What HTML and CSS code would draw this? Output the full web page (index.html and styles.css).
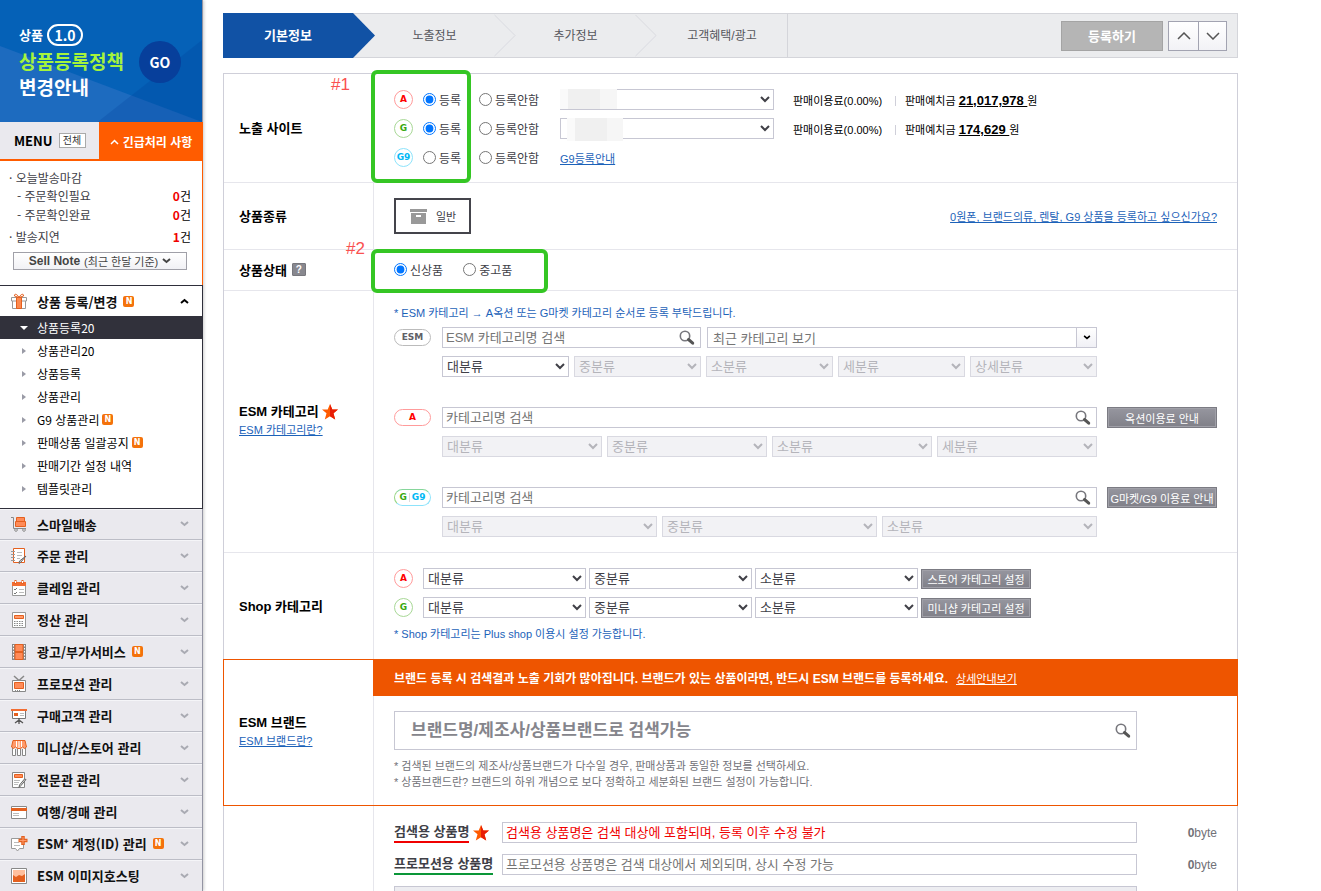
FILE: index.html
```html
<!DOCTYPE html>
<html lang="ko">
<head>
<meta charset="utf-8">
<title>상품등록</title>
<link rel="stylesheet" href="styles.css">
</head>
<body>
<svg class="defs" aria-hidden="true">
  <symbol id="down" viewBox="0 0 9 6"><path d="M1 1l3.500 3L8 1" fill="none" stroke="currentColor" stroke-width="2"/></symbol>
  <symbol id="search" viewBox="0 0 16 16"><circle cx="6" cy="6" r="4.700" fill="none" stroke="#77777d" stroke-width="1.600"/><path d="M9.500 9.500l4.200 3.700" stroke="#555" stroke-width="3" stroke-linecap="round"/></symbol>
  <symbol id="star" viewBox="0 0 16 16"><path d="M8 0l2.300 5.500H16l-4.500 3.800L13.200 15.500 8 12.200l-5.200 3.300 1.700-6.200L0 5.500h5.700z" fill="#ff5a00"/><path d="M8 0l2.300 5.500H16l-4.500 3.800L13.200 15.500 8 12.200z" fill="#e81c05"/></symbol>
</svg>
<div class="page">
  <aside class="side">
    <a class="promo" href="#">
      <svg class="promo-bg" viewBox="0 0 203 122" preserveAspectRatio="none" aria-hidden="true"><path d="M0 46L203 122H0z" fill="#1d6bbf"/><path d="M203 40L98 122h105z" fill="#003d94" fill-opacity=".22"/></svg>
      <span class="promo-text">
        <span class="promo-top">상품 <span class="pill-ver">1.0</span></span>
        <span class="lime">상품등록정책</span>
        <span>변경안내</span>
      </span>
      <span class="go">GO</span>
    </a>
    <div class="tabs">
      <div class="tab-menu">MENU <button type="button" class="all">전체</button></div>
      <button type="button" class="tab-urgent"><svg width="9" height="6" viewBox="0 0 9 6"><path d="M1 5l3.500-3.500L8 5" fill="none" stroke="#fff" stroke-width="1.500"/></svg>긴급처리 사항</button>
    </div>
    <div class="urgent">
      <ul>
        <li>· 오늘발송마감</li>
        <li class="sub">- 주문확인필요<span><b>0</b>건</span></li>
        <li class="sub">- 주문확인완료<span><b>0</b>건</span></li>
        <li class="late">· 발송지연<span><b>1</b>건</span></li>
      </ul>
      <button type="button" class="note-btn"><b>Sell Note</b> (최근 한달 기준) <svg width="9" height="6"><use href="#down"/></svg></button>
    </div>
    <nav class="open">
      <button type="button" class="item head">
        <svg class="ic" viewBox="0 0 16 16"><path d="M1.500 8v7.500h13V8" fill="#fff" stroke="#999"/><path d="M.5 4.500h15V8H.5z" fill="#fff" stroke="#999"/><path d="M5.500 4.500h5v11h-5z" fill="#fc8a50" stroke="#e4601f"/><path d="M8 4.500C6 .5 3 .5 3.500 3l4.500 1.500C10 .5 13 .5 12.500 3L8 4.500z" fill="#fff" stroke="#e4601f"/></svg>
        <span>상품 등록/변경</span><i class="n">N</i><svg class="chev" width="9" height="6" viewBox="0 0 9 6"><path d="M1 5l3.500-3L8 5" fill="none" stroke="#000" stroke-width="2"/></svg></button>
      <ul>
        <li><a class="on" href="#">상품등록20</a></li>
        <li><a href="#">상품관리20</a></li>
        <li><a href="#">상품등록</a></li>
        <li><a href="#">상품관리</a></li>
        <li><a href="#">G9 상품관리<i class="n">N</i></a></li>
        <li><a href="#">판매상품 일괄공지<i class="n">N</i></a></li>
        <li><a href="#">판매기간 설정 내역</a></li>
        <li><a href="#">템플릿관리</a></li>
      </ul>
    </nav>
    <nav class="closed">
      <button type="button" class="item"><svg class="ic" viewBox="0 0 16 16"><path d="M0 1.500h2.500v11H15" fill="none" stroke="#888"/><path d="M5.500 1.500h8v4h-8zM4.500 5.500h10v5h-10z" fill="#ff8b58" stroke="#e4601f"/><circle cx="5" cy="14" r="1.300" fill="#fff" stroke="#888"/><circle cx="13" cy="14" r="1.300" fill="#fff" stroke="#888"/></svg><span>스마일배송</span><svg class="chev" width="9" height="6"><use href="#down"/></svg></button>
      <button type="button" class="item"><svg class="ic" viewBox="0 0 16 16"><path d="M2.500.5h11v14h-11z" fill="#fff" stroke="#e4601f"/><path d="M0 3.500h4M0 6.500h4M0 9.500h4M0 12.500h4" stroke="#999"/><path d="M6 4.500h5M6 7.500h5M6 10.500h3" stroke="#bbb"/><path d="M15 8l-5 6-2 1.500L8.500 13z" fill="#ddd" stroke="#666"/></svg><span>주문 관리</span><svg class="chev" width="9" height="6"><use href="#down"/></svg></button>
      <button type="button" class="item"><svg class="ic" viewBox="0 0 16 16"><path d="M1.500 2.500h13v13h-13z" fill="#fff" stroke="#999"/><path d="M1 2h14v4H1z" fill="#f26d32"/><path d="M4.500 0v4M11.500 0v4" stroke="#e4601f" stroke-width="2"/><path d="M4.500 1v2M11.500 1v2" stroke="#fff"/><path d="M3 9l1 1 2-2M3 13l1 1 2-2" fill="none" stroke="#777"/><path d="M8 9.500h5M8 12.500h5" stroke="#bbb"/></svg><span>클레임 관리</span><svg class="chev" width="9" height="6"><use href="#down"/></svg></button>
      <button type="button" class="item"><svg class="ic" viewBox="0 0 16 16"><path d="M1.500.5h13v15h-13z" fill="#fff" stroke="#999"/><path d="M3.500 3.500h9v3h-9z" fill="#ff9a6b" stroke="#e4601f"/><path d="M3 9.500h10M3 11.500h10M3 13.500h10" stroke="#888" stroke-dasharray="1.500 1"/></svg><span>정산 관리</span><svg class="chev" width="9" height="6"><use href="#down"/></svg></button>
      <button type="button" class="item"><svg class="ic" viewBox="0 0 16 16"><path d="M1 0h3v16H1zM12 0h3v16h-3z" fill="#888"/><path d="M2.500 1v15M13.500 1v15" stroke="#fff" stroke-dasharray="1.500 1.500"/><path d="M4 .5h8v7H4zM4 8.500h8v7H4z" fill="#ff8b58" stroke="#e4601f"/></svg><span>광고/부가서비스</span><i class="n">N</i><svg class="chev" width="9" height="6"><use href="#down"/></svg></button>
      <button type="button" class="item"><svg class="ic" viewBox="0 0 16 16"><path d="M3 0l5 4.500L13 0" fill="none" stroke="#888" stroke-width="1.500"/><path d="M1.500 4.500h13v11h-13z" fill="#fff" stroke="#888"/><path d="M3.500 6.500h9v6h-9z" fill="#ff8b58" stroke="#e4601f"/><path d="M4 14.500h6" stroke="#888" stroke-dasharray="1 1"/></svg><span>프로모션 관리</span><svg class="chev" width="9" height="6"><use href="#down"/></svg></button>
      <button type="button" class="item"><svg class="ic" viewBox="0 0 16 16"><path d="M1.500 3v7.500h13V3" fill="#fff" stroke="#777"/><path d="M0 1h16v2H0z" fill="#f26d32"/><path d="M3 5h4v3H3z" fill="#e4601f"/><path d="M9 5.500h4M9 7.500h4" stroke="#bbb"/><path d="M8 10v6M8 12l-4 3M8 12l4 3" stroke="#555" stroke-width="1.300"/></svg><span>구매고객 관리</span><svg class="chev" width="9" height="6"><use href="#down"/></svg></button>
      <button type="button" class="item"><svg class="ic" viewBox="0 0 16 16"><path d="M1.500 7v8.500h3V9M11.500 9v6.500h3V7M6.500 9v6.500h3V9" fill="#fff" stroke="#888"/><path d="M2 .5h12L15.500 7l-2 1.500L11.500 7l-2 1.500h-3L4.500 7l-2 1.500L.5 7z" fill="#ff9a6b" stroke="#e4601f"/><path d="M5.500 1v6M8 1v7M10.500 1v6" stroke="#fff"/></svg><span>미니샵/스토어 관리</span><svg class="chev" width="9" height="6"><use href="#down"/></svg></button>
      <button type="button" class="item"><svg class="ic" viewBox="0 0 16 16"><path d="M1.500.5h12v15h-12z" fill="#fff" stroke="#888"/><path d="M3.500 2.500h8v3h-8z" fill="#ff8b58" stroke="#e4601f"/><path d="M3 8.500h6M3 10.500h5M3 12.500h4" stroke="#bbb"/><path d="M15 7.500l-5 6-2 2L8.500 13l5-6z" fill="#ddd" stroke="#666"/></svg><span>전문관 관리</span><svg class="chev" width="9" height="6"><use href="#down"/></svg></button>
      <button type="button" class="item"><svg class="ic" viewBox="0 0 16 16"><path d="M.5 2.500h15v12H.5z" fill="#fff" stroke="#888"/><path d="M0 4h16v3H0z" fill="#e4601f"/><path d="M2 9.500h6M2 11.500h6" stroke="#bbb"/></svg><span>여행/경매 관리</span><svg class="chev" width="9" height="6"><use href="#down"/></svg></button>
      <button type="button" class="item"><svg class="ic" viewBox="0 0 16 16"><path d="M.5 2.500h12v10H8.500L6.500 15 4.500 12.500h-4z" fill="#fff" stroke="#999"/><path d="M3 6.500h5M3 9.500h6" stroke="#bbb"/><path d="M12 0v9M7.500 4.500h9" stroke="#e4601f" stroke-width="3.500"/><path d="M12 1v7M8.500 4.500h7" stroke="#ff9a6b"/></svg><span>ESM⁺ 계정(ID) 관리</span><i class="n">N</i><svg class="chev" width="9" height="6"><use href="#down"/></svg></button>
      <button type="button" class="item"><svg class="ic" viewBox="0 0 16 16"><path d="M.5.5h15v15H.5z" fill="#fff" stroke="#888"/><path d="M2 2h12v12H2z" fill="#ffbf9d"/><path d="M2 7l3 2 3-2 3 1 3-2v8H2z" fill="#e4601f"/></svg><span>ESM 이미지호스팅</span><svg class="chev" width="9" height="6"><use href="#down"/></svg></button>
    </nav>
  </aside>

  <main class="main">
    <header class="steps">
      <a class="step active" href="#">기본정보<svg class="tip" viewBox="0 0 22 45"><path d="M0 0l22 22.500L0 45z" fill="#1152a5"/></svg></a>
      <a class="step" href="#">노출정보<svg class="tip" viewBox="0 0 22 45"><path d="M0 1l21.500 21.500L0 44" fill="none" stroke="#d8d9df"/></svg></a>
      <a class="step" href="#">추가정보<svg class="tip" viewBox="0 0 22 45"><path d="M0 1l21.500 21.500L0 44" fill="none" stroke="#d8d9df"/></svg></a>
      <a class="step last" href="#">고객혜택/광고</a>
      <div class="step-tools">
        <button type="button" class="submit">등록하기</button>
        <div class="arrows">
          <button type="button" aria-label="위로"><svg width="14" height="8" viewBox="0 0 14 8"><path d="M1 7l6-6 6 6" fill="none" stroke="#555" stroke-width="1.500"/></svg></button>
          <button type="button" aria-label="아래로"><svg width="14" height="8" viewBox="0 0 14 8"><path d="M1 1l6 6 6-6" fill="none" stroke="#555" stroke-width="1.500"/></svg></button>
        </div>
      </div>
    </header>

    <form class="panel">
      <section class="row">
        <h2 class="th">노출 사이트</h2>
        <div class="td sites">
          <span class="mark m1">#1</span><span class="frame f1"></span>
          <div class="site"><span class="badge a">A</span><label class="r1"><input type="radio" name="a" checked>등록</label><label class="r2"><input type="radio" name="a">등록안함</label>
            <span class="acct"><select aria-label="옥션 계정"><option></option></select><span class="veil v1"></span></span>
            <span class="fee">판매이용료(0.00%)</span><span class="cash">판매예치금 <a href="#">21,017,978&nbsp;</a>원</span></div>
          <div class="site"><span class="badge g">G</span><label class="r1"><input type="radio" name="g" checked>등록</label><label class="r2"><input type="radio" name="g">등록안함</label>
            <span class="acct"><select aria-label="G마켓 계정"><option></option></select><span class="veil v2"></span></span>
            <span class="fee">판매이용료(0.00%)</span><span class="cash">판매예치금 <a href="#">174,629&nbsp;</a>원</span></div>
          <div class="site"><span class="badge g9">G9</span><label class="r1"><input type="radio" name="g9">등록</label><label class="r2"><input type="radio" name="g9">등록안함</label><a class="link" href="#">G9등록안내</a></div>
        </div>
      </section>

      <section class="row">
        <h2 class="th">상품종류</h2>
        <div class="td kind">
          <button type="button" class="kind-btn"><svg width="17" height="15" viewBox="0 0 17 15"><path d="M0 0h17v3H0zM1 4h15v11H1z" fill="#999"/><path d="M6 6h5v2H6z" fill="#fff"/></svg>일반</button>
          <a class="link" href="#">0원폰, 브랜드의류, 렌탈, G9 상품을 등록하고 싶으신가요?</a>
        </div>
      </section>

      <section class="row">
        <h2 class="th">상품상태 <button type="button" class="help">?</button></h2>
        <div class="td state">
          <span class="mark m2">#2</span><span class="frame f2"></span>
          <label><input type="radio" name="state" checked>신상품</label>
          <label><input type="radio" name="state">중고품</label>
        </div>
      </section>

      <section class="row">
        <div class="th stack"><h2>ESM 카테고리 <svg class="star"><use href="#star"/></svg></h2><a class="link" href="#">ESM 카테고리란?</a></div>
        <div class="td cats">
          <p class="tip-text">* ESM 카테고리 → A옥션 또는 G마켓 카테고리 순서로 등록 부탁드립니다.</p>
          <div class="cat">
            <span class="pill esm">ESM</span>
            <div class="fields">
              <div class="pair">
                <div class="search short"><input type="text" aria-label="ESM 카테고리명 검색" placeholder="ESM 카테고리명 검색"><svg><use href="#search"/></svg></div>
                <div class="recent"><input type="text" aria-label="최근 카테고리" value="최근 카테고리 보기" readonly><button type="button" aria-label="열기"><svg width="8" height="5" viewBox="0 0 9 6"><use href="#down"/></svg></button></div>
              </div>
              <div class="cols">
                <select aria-label="대분류"><option>대분류</option></select><select aria-label="중분류" disabled><option>중분류</option></select><select aria-label="소분류" disabled><option>소분류</option></select><select aria-label="세분류" disabled><option>세분류</option></select><select aria-label="상세분류" disabled><option>상세분류</option></select>
              </div>
            </div>
            <span class="cta-space"></span>
          </div>
          <div class="cat">
            <span class="pill pa">A</span>
            <div class="fields">
              <div class="search"><input type="text" aria-label="옥션 카테고리명 검색" placeholder="카테고리명 검색"><svg><use href="#search"/></svg></div>
              <div class="cols">
                <select aria-label="옥션 대분류" disabled><option>대분류</option></select><select aria-label="옥션 중분류" disabled><option>중분류</option></select><select aria-label="옥션 소분류" disabled><option>소분류</option></select><select aria-label="옥션 세분류" disabled><option>세분류</option></select>
              </div>
            </div>
            <button type="button" class="dark">옥션이용료 안내</button>
          </div>
          <div class="cat">
            <span class="pill pg"><span class="gt">G</span><span class="g9t">G9</span></span>
            <div class="fields">
              <div class="search"><input type="text" aria-label="G마켓 카테고리명 검색" placeholder="카테고리명 검색"><svg><use href="#search"/></svg></div>
              <div class="cols">
                <select aria-label="G마켓 대분류" disabled><option>대분류</option></select><select aria-label="G마켓 중분류" disabled><option>중분류</option></select><select aria-label="G마켓 소분류" disabled><option>소분류</option></select>
              </div>
            </div>
            <button type="button" class="dark">G마켓/G9 이용료 안내</button>
          </div>
        </div>
      </section>

      <section class="row shop">
        <h2 class="th">Shop 카테고리</h2>
        <div class="td shops">
          <div class="shop-line"><span class="badge a">A</span><select aria-label="스토어 대분류"><option>대분류</option></select><select aria-label="스토어 중분류"><option>중분류</option></select><select aria-label="스토어 소분류"><option>소분류</option></select><button type="button" class="dark">스토어 카테고리 설정</button></div>
          <div class="shop-line"><span class="badge g">G</span><select aria-label="미니샵 대분류"><option>대분류</option></select><select aria-label="미니샵 중분류"><option>중분류</option></select><select aria-label="미니샵 소분류"><option>소분류</option></select><button type="button" class="dark">미니샵 카테고리 설정</button></div>
          <p class="tip-text">* Shop 카테고리는 Plus shop 이용시 설정 가능합니다.</p>
        </div>
      </section>

      <section class="row brand">
        <div class="th stack"><h2>ESM 브랜드</h2><a class="link" href="#">ESM 브랜드란?</a></div>
        <div class="td brand-td">
          <p class="notice"><b>브랜드 등록 시 검색결과 노출 기회가 많아집니다. 브랜드가 있는 상품이라면, 반드시 ESM 브랜드를 등록하세요.</b><a href="#">상세안내보기</a></p>
          <div class="brand-body">
            <div class="search big"><input type="text" aria-label="브랜드 검색" placeholder="브랜드명/제조사/상품브랜드로 검색가능"><svg><use href="#search"/></svg></div>
            <p class="gray">* 검색된 브랜드의 제조사/상품브랜드가 다수일 경우, 판매상품과 동일한 정보를 선택하세요.</p>
            <p class="gray">* 상품브랜드란? 브랜드의 하위 개념으로 보다 정확하고 세분화된 브랜드 설정이 가능합니다.</p>
          </div>
        </div>
      </section>

      <section class="row names">
        <div class="th"></div>
        <div class="td name-td">
          <div class="name"><label for="n1"><span class="u red">검색용 상품명</span><svg class="star"><use href="#star"/></svg></label><input id="n1" class="red-ph" type="text" placeholder="검색용 상품명은 검색 대상에 포함되며, 등록 이후 수정 불가"><span class="byte"><b>0</b>byte</span></div>
          <div class="name"><label for="n2"><span class="u green">프로모션용 상품명</span></label><input id="n2" type="text" placeholder="프로모션용 상품명은 검색 대상에서 제외되며, 상시 수정 가능"><span class="byte"><b>0</b>byte</span></div>
          <div class="name"><input class="wide" type="text" aria-label="상품명" disabled><span class="byte"></span></div>
        </div>
      </section>
    </form>
  </main>
</div>
</body>
</html>
```
FILE: styles.css
```css
* { box-sizing: border-box; }
body, h2, p, ul { margin: 0; padding: 0; }
ul { list-style: none; }
body, button, input, select { font-family: "Liberation Sans", "Noto Sans CJK KR", sans-serif; font-size: 12px; }
body { color: #404047; background: #fff; }
button { padding: 0; cursor: pointer; }
svg { flex: none; }
.defs { position: absolute; width: 0; height: 0; }
.page { display: flex; height: 100vh; overflow: hidden; }

/* sidebar */
.side { flex: none; width: 203px; border-right: 1px solid #9394a3; background: #eae9ee; box-shadow: 1px 0 3px #ccc; font-family: "Noto Sans CJK KR", sans-serif; }
.side .item, .promo, .tabs, .tab-urgent { font-family: "Noto Sans CJK KR", sans-serif; }
.promo { position: relative; display: flex; height: 122px; padding: 22px 0 0 19px; background: #0561b7; color: #fff; font-weight: 700; font-size: 19px; line-height: 26px; text-decoration: none; overflow: hidden; }
.promo-bg { position: absolute; inset: 0; width: 100%; height: 100%; }
.promo-text { position: relative; display: flex; flex-direction: column; width: 120px; }
.promo-top { display: flex; align-items: center; gap: 4px; font-size: 13px; height: 26px; }
.pill-ver { width: 36px; height: 22px; border: 2px solid #fff; border-radius: 11px; font-size: 14px; line-height: 18px; text-align: center; }
.lime { color: #a5f43c; }
.go { position: relative; width: 42px; height: 42px; margin-top: 19px; border-radius: 50%; background: #073f9b; font-size: 14px; line-height: 42px; text-align: center; }
.tabs { display: flex; height: 39px; font-weight: 700; }
.tab-menu { display: flex; align-items: center; gap: 6px; width: 99px; padding-left: 14px; border-bottom: 2px solid #ff5c00; color: #000; font-size: 13px; }
.all { width: 27px; height: 15px; border: 1px solid #aaa; background: #fff; font-size: 10px; line-height: 12px; color: #333; }
.tab-urgent { display: flex; align-items: center; justify-content: center; gap: 4px; flex: 1; margin-right: -1px; border: 0; background: #ff5c00; color: #fff; font-size: 12px; font-weight: 700; }
.urgent { height: 124px; margin-right: -1px; padding-top: 8px; border-right: 1px solid #ff5c00; background: #fff; }
.urgent li { display: flex; justify-content: space-between; padding: 0 11px 0 9px; line-height: 18px; }
.urgent .sub { padding-left: 17px; padding-bottom: 1px; }
.urgent .late { padding-top: 3px; padding-bottom: 6px; }
.urgent li span { color: #000; }
.urgent li b { color: #f00000; }
.note-btn { display: flex; align-items: center; justify-content: center; gap: 4px; width: 174px; height: 18px; margin-left: 13px; border: 1px solid #a0a0a8; background: linear-gradient(#fff, #f1f1f5); font-size: 11px; color: #444; }
.note-btn b { font-size: 12px; }
.open { border: 1px solid #2f2f3b; border-left: 0; margin-right: -1px; padding-bottom: 8px; background: #fff; }
.item { display: flex; align-items: center; width: 100%; height: 32px; padding: 0 13px 0 11px; border: 0; border-bottom: 1px solid #bcbdc6; background: none; color: #111; font-size: 13px; font-weight: 700; }
.closed .item { box-shadow: inset 0 1px #f5f5f8; }
.closed .item:first-child { height: 31px; }
.item.head { height: 30px; border: 0; }
.ic { width: 16px; height: 16px; margin-right: 10px; overflow: visible; }
.chev { margin-left: auto; color: #a9aab2; }
.n { display: inline-block; width: 11px; height: 11px; margin-left: 6px; border-radius: 2px; background: #f4720b; color: #fff; font: 700 8px/11px "DejaVu Sans", sans-serif; text-align: center; }
.open a { display: flex; align-items: center; height: 23px; padding-left: 37px; color: #000; text-decoration: none; position: relative; }
.open a .n { margin-left: 3px; }
.open a::before { content: ""; position: absolute; left: 22px; border: 3px solid transparent; border-left: 4px solid #9a9ba6; border-right: 0; }
.open a.on { background: #31313b; color: #fff; }
.open a.on::before { left: 20px; border: 4px solid transparent; border-top-color: #fff; border-bottom: 0; }

/* steps */
.main { flex: 1; min-width: 0; padding: 13px 83px 0 20px; }
.steps { display: flex; height: 45px; border: 1px solid #d4d5da; border-left: 0; background: #ebecee; }
.step { position: relative; display: flex; align-items: center; justify-content: center; width: 141px; padding-left: 22px; color: #55565c; text-decoration: none; padding-bottom: 2px; }
.step.active { width: 130px; padding-left: 0; margin: -1px 0; background: #1152a5; color: #fff; font-size: 13px; font-weight: 700; }
.step.last { width: 153px; border-right: 1px solid #d4d5da; }
.tip { position: absolute; left: 100%; top: 0; width: 22px; height: 100%; z-index: 1; }
.step-tools { display: flex; align-items: center; gap: 5px; margin-left: auto; padding-right: 10px; }
.submit { width: 102px; height: 30px; border: 1px solid #a4a4a4; background: #b5b5b5; color: #fff; font-size: 13px; font-weight: 700; }
.arrows { display: flex; border: 1px solid #a2a3b1; }
.arrows button { width: 29px; height: 28px; border: 0; background: linear-gradient(#fff, #f2f2f6); }
.arrows button + button { width: 28px; border-left: 1px solid #a2a3b1; }

/* form panel */
.panel { margin-top: 15px; border: 1px solid #cfcfd9; }
.row { display: grid; grid-template-columns: 150px 1fr; border-bottom: 1px solid #e6e6ec; }
.th { display: flex; align-items: center; gap: 5px; padding: 0 0 2px 15px; border-right: 1px solid #e6e6ec; color: #000; font-size: 13px; font-weight: 700; }
.td { position: relative; min-width: 0; padding: 15px 20px; }
.stack { flex-direction: column; align-items: flex-start; justify-content: center; gap: 0; }
.stack h2 { display: flex; align-items: center; gap: 3px; font-size: 13px; line-height: 18px; }
.stack .link { font-weight: 400; line-height: 18px; }
.link { color: #1c62b9; font-size: 11px; text-decoration: underline; }
.star { width: 16px; height: 16px; }
input[type=radio] { width: 13px; height: 13px; margin: 0 3px 0 0; accent-color: #0075ff; }
label { display: flex; align-items: center; }
select, input[type=text] { height: 21px; min-width: 0; margin: 0; padding: 0; border: 1px solid #c7c7d3; border-radius: 0; background: #fff; color: #404047; font-size: 13px; }
select:disabled { border-color: #d9d9e1; background: #f2f2f5; color: #b4b4ba; opacity: 1; }
input[type=text] { width: 100%; padding: 0 3px; }
input::placeholder { color: #757575; }

.sites { display: flex; flex-direction: column; gap: 8px; padding-bottom: 14px; }
.site { display: flex; align-items: center; height: 21px; }
.badge { display: flex; align-items: center; justify-content: center; flex: none; width: 19px; height: 19px; border: 1px solid; border-radius: 50%; font: 700 9px/17px "DejaVu Sans", sans-serif; margin-right: 10px; }
.badge.a { border-color: #ff9b9b; color: #f00; }
.badge.g { border-color: #a8d896; color: #39a80e; }
.badge.g9 { border-color: #8de3fb; color: #00b8f5; }
.r1 { width: 56px; }
.r2 { width: 81px; }
.acct { position: relative; width: 214px; height: 21px; }
.acct select { width: 100%; display: block; }
.veil { position: absolute; background: linear-gradient(90deg, #fafafa 8px, #f0f0f0 8px 40px, #f6f6f6 40px); }
.v1 { left: 0; top: 0; width: 57px; height: 20px; }
.v2 { left: 7px; top: 0; width: 56px; height: 23px; }
.fee, .cash { color: #000; font-size: 11px; white-space: nowrap; }
.fee { width: 103px; margin-left: 19px; position: relative; }
.fee::after { content: ""; position: absolute; right: 0; top: 4px; width: 1px; height: 10px; background: #cfcfd9; }
.cash { margin-left: 9px; }
.cash a { color: #000; font-size: 13px; font-weight: 700; }
.frame { position: absolute; border: 4px solid #35c624; border-radius: 6px; z-index: 2; pointer-events: none; }
.f1 { left: -3px; top: -4px; width: 100px; height: 113px; }
.f2 { left: -3px; top: -1px; width: 177px; height: 44px; }
.mark { position: absolute; color: #fa5151; font-size: 17px; line-height: 20px; z-index: 2; }
.m1 { left: -43px; top: 1px; }
.m2 { left: -28px; top: -11px; }

.kind { display: flex; align-items: center; justify-content: space-between; }
.kind-btn { display: flex; align-items: center; gap: 9px; width: 77px; height: 36px; padding-left: 14px; border: 2px solid #44444b; background: #fff; color: #404047; font-size: 11px; }
.help { width: 14px; height: 13px; border: 1px solid #77777d; border-radius: 1px; background: #88888f; color: #fff; font-size: 10px; font-weight: 700; line-height: 11px; }
.state { display: flex; align-items: center; gap: 20px; height: 40px; padding-top: 0; padding-bottom: 2px; }

.tip-text { color: #1c62b9; font-size: 11px; line-height: 16px; }
.cats .tip-text { margin: -1px 0 6px; }
.cat { display: flex; align-items: flex-start; margin-bottom: 30px; }
.cat:last-child { margin-bottom: 0; }
.pill { display: flex; align-items: center; justify-content: center; flex: none; width: 37px; height: 17px; margin: 2px 11px 0 0; border: 1px solid; border-radius: 9px; font: 700 9px/15px "DejaVu Sans", sans-serif; }
.esm { border-color: #bbb; color: #606066; }
.pa { border-color: #ff9b9b; color: #f00; }
.pg { border-color: #86d69b #8de3fb #8de3fb #97d582; }
.gt { padding-right: 2px; border-right: 1px solid #ddd; color: #39a80e; line-height: 9px; }
.g9t { padding-left: 2px; color: #00b8f5; }
.fields { flex: 1; min-width: 0; display: flex; flex-direction: column; gap: 8px; }
.cols { display: grid; grid-auto-flow: column; grid-auto-columns: 1fr; gap: 5px; }
.pair { display: flex; gap: 6px; }
.search { position: relative; }
.search input { display: block; }
.search svg { position: absolute; right: 6px; top: 3px; width: 16px; height: 16px; }
.short { flex: 259; }
.recent { display: flex; flex: 390; }
.recent button { flex: none; width: 21px; margin-left: -1px; border: 1px solid #c7c7d3; background: linear-gradient(#fff, #f0f0f5); }
.recent input[type=text] { padding: 0 5px; color: #757575; }
.recent svg { display: block; margin: 0 auto; }
.cta-space { flex: none; width: 120px; }
.dark { flex: none; width: 110px; height: 21px; border: 1px solid #7b7b83; background: linear-gradient(#96969f, #808088); box-shadow: inset 0 0 0 1px #a0a0a8; color: #fff; font-size: 11px; white-space: nowrap; }
.cat .dark { margin-left: 10px; }

.shop { border-bottom: 0; }
.shops { display: flex; flex-direction: column; gap: 8px; padding-bottom: 17px; }
.shop-line { display: flex; align-items: center; gap: 3px; }
.shop-line .badge { margin-right: 7px; }
.shop-line select { width: 163px; }
.shop-line .dark { height: 20px; }

.brand { margin: 0 -1px; border: 1px solid #ee5500; }
.brand-td { padding: 0; }
.notice { display: flex; align-items: center; gap: 8px; height: 37px; margin: -1px -1px 0; padding-left: 21px; background: #ee5500; color: #fff; font-size: 12px; }
.notice a { color: #fff; font-size: 11px; }
.brand-body { padding: 15px 100px 15px 20px; }
.big { margin-bottom: 8px; }
.big input[type=text] { height: 39px; padding: 0 16px; font-size: 17px; font-weight: 700; }
.big input::placeholder { color: #85858c; }
.big svg { top: 12px; }
.gray { color: #717177; font-size: 11px; line-height: 16px; }

.names { border-bottom: 0; }
.name-td { display: flex; flex-direction: column; gap: 11px; padding-top: 16px; }
.name { display: flex; align-items: center; height: 21px; }
.name label { flex: none; gap: 4px; width: 108px; font-size: 13px; font-weight: 700; line-height: 18px; }
.u { border-bottom: 2px solid; }
.red { border-color: #f00000; }
.green { border-color: #0a9638; }
.name input[type=text] { flex: 1; }
.red-ph::placeholder { color: #f00000; }
.name .wide { background: #ededf1; }
.byte { flex: none; width: 80px; text-align: right; color: #717177; }
```
